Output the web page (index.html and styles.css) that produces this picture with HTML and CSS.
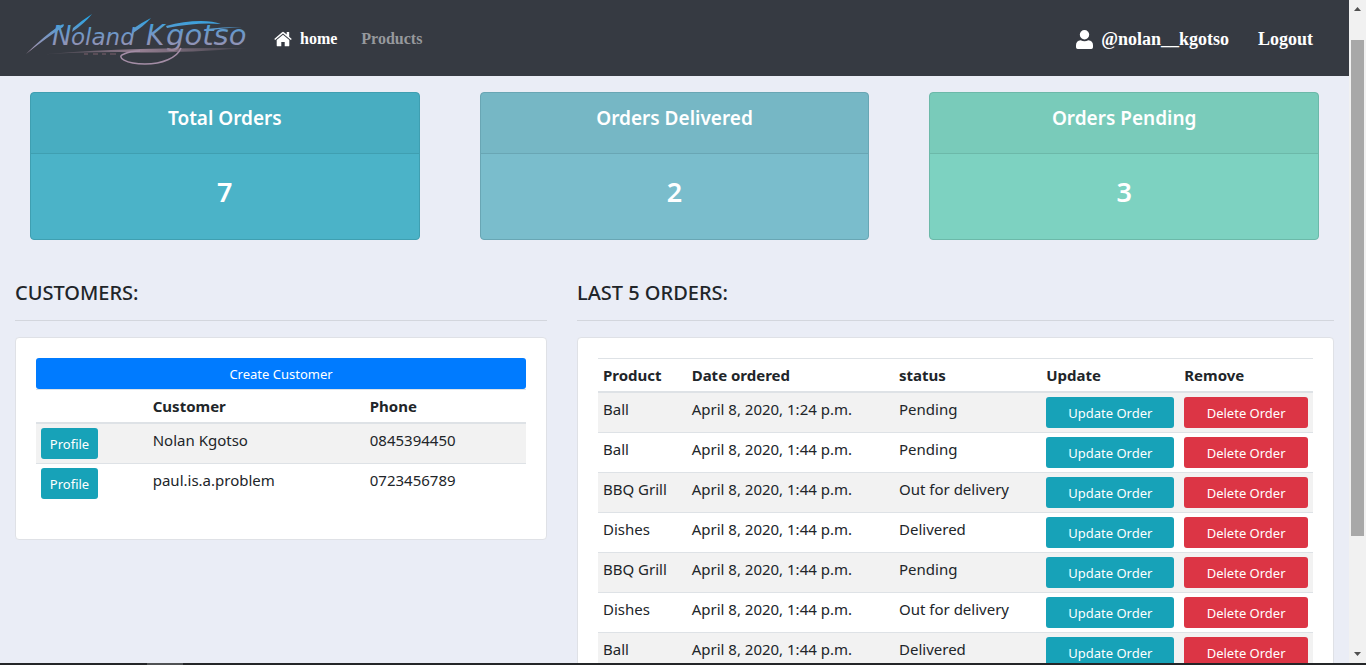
FILE: index.html
```html
<!DOCTYPE html>
<html lang="en">
<head>
<meta charset="utf-8">
<title>Dashboard</title>
<link rel="stylesheet" href="styles.css">
</head>
<body>
<div class="window">
  <div class="page">
    <nav class="navbar">
      <a class="brand" href="#" aria-label="Noland Kgotso">
        <svg width="230" height="60" viewBox="25 8 230 60">
          <defs>
            <linearGradient id="ink" gradientUnits="userSpaceOnUse" x1="0" y1="16" x2="0" y2="52">
              <stop offset="0" stop-color="#27a5e6"/>
              <stop offset="0.5" stop-color="#7596c4"/>
              <stop offset="1" stop-color="#ab91a8"/>
            </linearGradient>
            <linearGradient id="line" gradientUnits="userSpaceOnUse" x1="36" y1="0" x2="246" y2="0">
              <stop offset="0" stop-color="#8d7888" stop-opacity="0.1"/>
              <stop offset="0.5" stop-color="#957f92"/>
              <stop offset="1" stop-color="#8d7888" stop-opacity="0.1"/>
            </linearGradient>
          </defs>
          <g class="brand-text" fill="url(#ink)">
            <text x="52" y="44" font-size="26">N</text>
            <text x="71" y="44" font-size="23">oland</text>
            <text x="146" y="44" font-size="28">K</text>
            <text x="166" y="44" font-size="29">gotso</text>
          </g>
          <g fill="url(#ink)">
            <path d="M26 53 Q44 35 59 25 Q66 21 63 26 Q46 37 26 53Z"/>
            <path d="M73 27 Q81 20 92 13 Q85 22 72 31Z"/>
            <path d="M134 27 Q141 22 151 17 Q144 25 133 32Z"/>
            <path d="M166 25 Q184 20 201 20 Q213 20 221 23 Q197 21 167 27Z"/>
            <path d="M206 28 Q222 26 242 26 Q222 27 206 30Z"/>
          </g>
          <path d="M36 54 Q115 46 247 47 Q170 53 120 51 Q70 51 36 54Z" fill="url(#line)"/>
          <path d="M181 47 C177 57 162 63 145 63 C126 63 115 56 124 53 Q130 50 140 50" fill="none" stroke="#a48da6" stroke-width="1.5"/>
          <path d="M84 53h4M93 53h5M102 53h4M110 53h6" stroke="#66545f" stroke-width="1.5"/>
        </svg>
      </a>
      <a class="nav-link active" href="#">
        <svg width="18" height="16" viewBox="0 0 18 16" fill="#fff"><path d="M9 3.8 2.7 9V14.4q0 .9 1 .9h3.6v-4.4h3.4v4.4h3.6q1 0 1-.9V9Z"/><path d="M.2 8 8.1 1.2Q9 .5 9.9 1.2L12.7 3.6V1h2.5v4.8L17.8 8 16.8 9.1 9 2.6 1.2 9.1Z"/></svg>
        home</a>
      <a class="nav-link" href="#">Products</a>
      <div class="account">
        <a class="nav-link active" href="#">
          <svg width="17" height="19" viewBox="0 0 17 19" fill="#fff"><circle cx="8.5" cy="4.8" r="4.7"/><path d="M4.7 10.2Q8.5 12.2 12.3 10.2Q17 10.6 17 15.2V17.2Q17 19 15.3 19H1.7Q0 19 0 17.2V15.2Q0 10.6 4.7 10.2Z"/></svg>
          @nolan__kgotso</a>
        <a class="nav-link active" href="#">Logout</a>
      </div>
    </nav>

    <section class="stats">
      <div class="stat total"><h5>Total Orders</h5><h3>7</h3></div>
      <div class="stat delivered"><h5>Orders Delivered</h5><h3>2</h3></div>
      <div class="stat pending"><h5>Orders Pending</h5><h3>3</h3></div>
    </section>

    <main class="columns">
      <section class="customers">
        <h5 class="title">CUSTOMERS:</h5>
        <div class="card">
          <a class="btn primary" href="#">Create Customer</a>
          <table>
            <colgroup><col class="c-link"><col class="c-name"><col></colgroup>
            <thead><tr><th></th><th>Customer</th><th>Phone</th></tr></thead>
            <tbody>
              <tr><td><a class="btn info small" href="#">Profile</a></td><td>Nolan Kgotso</td><td>0845394450</td></tr>
              <tr><td><a class="btn info small" href="#">Profile</a></td><td>paul.is.a.problem</td><td>0723456789</td></tr>
            </tbody>
          </table>
        </div>
      </section>
      <section class="orders">
        <h5 class="title">LAST 5 ORDERS:</h5>
        <div class="card">
          <table>
            <colgroup><col class="c-product"><col class="c-date"><col class="c-status"><col class="c-update"><col></colgroup>
            <thead><tr><th>Product</th><th>Date ordered</th><th>status</th><th>Update</th><th>Remove</th></tr></thead>
            <tbody>
              <tr><td>Ball</td><td>April 8, 2020, 1:24 p.m.</td><td>Pending</td><td><a class="btn info" href="#">Update Order</a></td><td><a class="btn danger" href="#">Delete Order</a></td></tr>
              <tr><td>Ball</td><td>April 8, 2020, 1:44 p.m.</td><td>Pending</td><td><a class="btn info" href="#">Update Order</a></td><td><a class="btn danger" href="#">Delete Order</a></td></tr>
              <tr><td>BBQ Grill</td><td>April 8, 2020, 1:44 p.m.</td><td>Out for delivery</td><td><a class="btn info" href="#">Update Order</a></td><td><a class="btn danger" href="#">Delete Order</a></td></tr>
              <tr><td>Dishes</td><td>April 8, 2020, 1:44 p.m.</td><td>Delivered</td><td><a class="btn info" href="#">Update Order</a></td><td><a class="btn danger" href="#">Delete Order</a></td></tr>
              <tr><td>BBQ Grill</td><td>April 8, 2020, 1:44 p.m.</td><td>Pending</td><td><a class="btn info" href="#">Update Order</a></td><td><a class="btn danger" href="#">Delete Order</a></td></tr>
              <tr><td>Dishes</td><td>April 8, 2020, 1:44 p.m.</td><td>Out for delivery</td><td><a class="btn info" href="#">Update Order</a></td><td><a class="btn danger" href="#">Delete Order</a></td></tr>
              <tr><td>Ball</td><td>April 8, 2020, 1:44 p.m.</td><td>Delivered</td><td><a class="btn info" href="#">Update Order</a></td><td><a class="btn danger" href="#">Delete Order</a></td></tr>
            </tbody>
          </table>
        </div>
      </section>
    </main>
  </div>
  <div class="scrollbar" aria-hidden="true">
    <svg width="7" height="4" viewBox="0 0 7 4"><path d="M0 4 3.5 0 7 4Z" fill="#505050"/></svg>
    <div class="track"><div class="thumb"></div></div>
    <svg width="7" height="4" viewBox="0 0 7 4"><path d="M0 0 3.5 4 7 0Z" fill="#505050"/></svg>
  </div>
</div>
<div class="taskbar" aria-hidden="true"><div class="task"></div></div>
</body>
</html>
```

FILE: styles.css
```css
* { box-sizing: border-box; }
body {
  margin: 0;
  height: 100vh;
  display: flex;
  flex-direction: column;
  overflow: hidden;
  background: #eaedf6;
  color: #212529;
  font-family: "Segoe UI", "Noto Sans", sans-serif;
  font-size: 15px;
  line-height: 24px;
}
h3, h5 { margin: 0; font-weight: 500; }
a { text-decoration: none; color: inherit; }
svg { display: block; flex: none; }

.window { flex: 1; min-height: 0; display: flex; }
.page { flex: 1; min-width: 0; overflow: hidden; }

.navbar {
  display: flex;
  align-items: center;
  height: 76px;
  padding: 2px 36px 0 25px;
  background: #363a42;
  font-family: "Liberation Serif", serif;
  font-weight: 700;
  font-size: 16px;
}
.brand { margin-right: 19px; }
.brand-text { font-family: "DejaVu Sans", sans-serif; font-style: italic; font-weight: 400; }
.nav-link { display: flex; align-items: center; gap: 8px; margin-right: 24px; color: #96999d; }
.nav-link.active { color: #fff; }
.account { display: flex; gap: 29px; margin-left: auto; font-size: 18px; }
.account .nav-link { margin-right: 0; }

.stats { display: flex; gap: 60px; padding: 16px 30px 0; }
.stat {
  flex: 1;
  border: 1px solid;
  border-radius: 4px;
  color: #fff;
  text-align: center;
}
.stat h5 {
  padding: 13px 20px 23px;
  border-bottom: 1px solid;
  background: rgba(0, 0, 0, 0.03);
  font-size: 19px;
  font-weight: 600;
}
.stat h3 { padding: 21px 20px 30px; font-size: 27px; font-weight: 600; line-height: 34px; }
.total { background: #4bb3c8; border-color: #3f9fb1; }
.delivered { background: #7abdcc; border-color: #69a6b4; }
.pending { background: #7dd2c1; border-color: #6cb9a9; }
.stat h5 { border-color: inherit; }

.columns { display: flex; gap: 30px; padding: 41px 15px 0; align-items: flex-start; }
.customers { flex: 532; min-width: 0; }
.orders { flex: 757; min-width: 0; }
.title {
  margin-bottom: 16px;
  padding-bottom: 15px;
  border-bottom: 1px solid #d3d6dd;
  font-size: 20px;
}
.card {
  padding: 20px;
  background: #fff;
  border: 1px solid #dfe1e6;
  border-radius: 4px;
}

table { width: 100%; table-layout: fixed; border-spacing: 0; margin-bottom: 16px; }
th, td { padding: 4px 5px; text-align: left; vertical-align: top; white-space: nowrap; }
th { height: 35px; border-top: 1px solid #dee2e6; border-bottom: 2px solid #dee2e6; font-weight: 700; }
tr + tr td { border-top: 1px solid #dee2e6; }
td { line-height: 24px; }
tbody tr:nth-child(odd) { background: #f2f2f2; }
.c-link { width: 22.8%; }
.c-name { width: 44.3%; }
.c-product { width: 12.4%; }
.c-date { width: 29%; }
.c-status { width: 20.6%; }
.c-update { width: 19.3%; }

.btn {
  display: block;
  padding: 6px 8px 4px;
  border-radius: 3px;
  color: #fff;
  font-size: 13px;
  line-height: 21px;
  text-align: center;
}
.small { width: 57px; }
.primary { background: #007bff; }
.info { background: #17a2b8; }
.danger { background: #dc3545; }

.scrollbar {
  display: flex;
  flex-direction: column;
  align-items: center;
  gap: 7px;
  width: 17px;
  padding: 7px 0;
  background: #f1f1f1;
}
.track { flex: 1; width: 13px; padding-top: 22px; }
.thumb { height: 82%; background: #a8a8a8; }
.taskbar { height: 2px; padding-left: 147px; background: #242628; }
.task { width: 36px; height: 2px; background: #505254; }
```
